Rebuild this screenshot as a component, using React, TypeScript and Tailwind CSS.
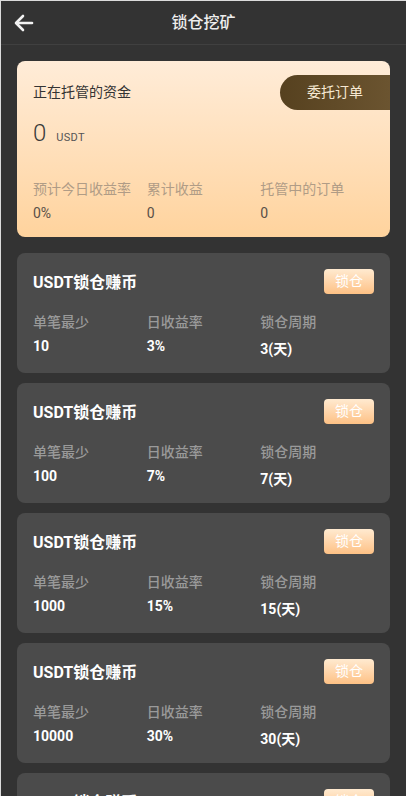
import React from "react";

const items = [
  { min: "10", rate: "3%", days: "3" },
  { min: "100", rate: "7%", days: "7" },
  { min: "1000", rate: "15%", days: "15" },
  { min: "10000", rate: "30%", days: "30" },
  { min: "50000", rate: "50%", days: "60" },
];

const font = "font-['Roboto','Noto_Sans_CJK_SC',sans-serif]";

export default function App() {
  return (
    <div className={`w-[406px] h-[796px] overflow-hidden bg-[#333333] border-l border-t border-[#dcdcdc] ${font}`}>
      <div className="h-[44px] flex items-center relative border-b border-[#404040]">
        <div className="pl-[13px] flex items-center">
          <svg width="20" height="18" viewBox="0 0 20 18" fill="none" stroke="#f2f2f2" strokeWidth="2.6" strokeLinecap="round" strokeLinejoin="round">
            <path d="M18 9H3" />
            <path d="M9 2L2 9l7 7" />
          </svg>
        </div>
        <div className="absolute inset-0 flex items-center justify-center text-[16px] text-[#ededed] font-medium pointer-events-none">
          锁仓挖矿
        </div>
      </div>

      <div className="px-[16px] pt-[16px] flex flex-col gap-[10px]">
        <div className="rounded-[8px] bg-gradient-to-b from-[#ffecd8] to-[#ffd39d] pl-[16px] pt-[14px] pb-[14px] mb-[6px]">
          <div className="flex items-center justify-between">
            <div className="text-[14px] text-[#333]">正在托管的资金</div>
            <div className="h-[35px] w-[110px] rounded-l-full bg-gradient-to-r from-[#56411f] to-[#6b5430] flex items-center justify-center text-[14px] text-[#f6e8d2]">
              委托订单
            </div>
          </div>
          <div className="mt-[9px] flex items-baseline h-[28px]">
            <span className="text-[24px] leading-[28px] font-light text-[#3a3a3a]">0</span>
            <span className="ml-[10px] text-[11px] text-[#555] tracking-wide">USDT</span>
          </div>
          <div className="grid grid-cols-3 pr-[16px] mt-[32px]">
            {[
              ["预计今日收益率", "0%"],
              ["累计收益", "0"],
              ["托管中的订单", "0"],
            ].map(([l, v]) => (
              <div key={l}>
                <div className="text-[14px] leading-[20px] text-[#b09c86] whitespace-nowrap">{l}</div>
                <div className="mt-[4px] text-[14px] leading-[20px] text-[#5a5048]">{v}</div>
              </div>
            ))}
          </div>
        </div>

        {items.map((it, i) => (
          <div key={i} className="rounded-[8px] bg-[#4b4b4b] px-[16px] pt-[16px] pb-[17px]">
            <div className="flex items-center justify-between h-[25px]">
              <div className="text-[16px] font-bold text-white mt-[3px]">USDT锁仓赚币</div>
              <div className="h-[25px] w-[50px] rounded-[4px] bg-gradient-to-b from-[#ffead0] to-[#fdc185] flex items-center justify-center text-[14px] text-white">
                锁仓
              </div>
            </div>
            <div className="grid grid-cols-3 mt-[18px]">
              {[
                ["单笔最少", it.min],
                ["日收益率", it.rate],
                ["锁仓周期", `${it.days}(天)`],
              ].map(([l, v], j) => (
                <div key={l}>
                  <div className="text-[14px] leading-[20px] text-[#9a9a9a] font-medium">{l}</div>
                  <div className={`mt-[4px] text-[14px] leading-[20px] font-bold text-white ${j === 2 ? "translate-y-[3px]" : ""}`}>{v}</div>
                </div>
              ))}
            </div>
          </div>
        ))}
      </div>
    </div>
  );
}
